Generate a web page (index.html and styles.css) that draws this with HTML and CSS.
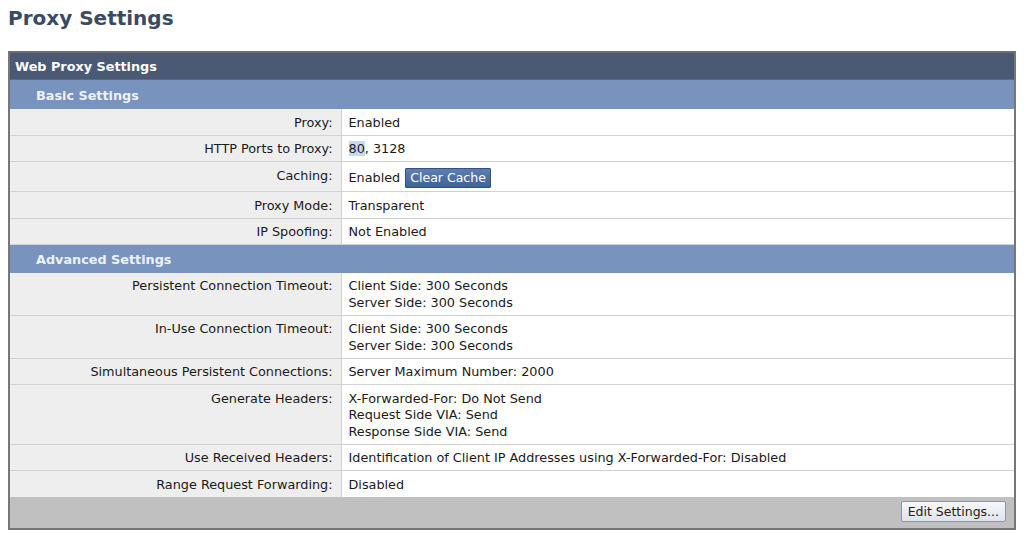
FILE: index.html
```html
<!DOCTYPE html>
<html lang="en">

<head>
    <meta charset="UTF-8">
    <title>Proxy Settings</title>
    <link rel="stylesheet" href="styles.css">
</head>

<body>
    <h1 class="page-title">Proxy Settings</h1>

    <div class="panel">
        <div class="panel-title">Web Proxy Settings</div>
        <table class="settings">
            <tr class="section first">
                <th colspan="2">Basic Settings</th>
            </tr>
            <tr>
                <td class="label">Proxy:</td>
                <td>Enabled</td>
            </tr>
            <tr>
                <td class="label">HTTP Ports to Proxy:</td>
                <td><span class="hl">80</span>, 3128</td>
            </tr>
            <tr>
                <td class="label">Caching:</td>
                <td>Enabled <button class="btn-blue">Clear Cache</button></td>
            </tr>
            <tr>
                <td class="label">Proxy Mode:</td>
                <td>Transparent</td>
            </tr>
            <tr>
                <td class="label">IP Spoofing:</td>
                <td>Not Enabled</td>
            </tr>
            <tr class="section">
                <th colspan="2">Advanced Settings</th>
            </tr>
            <tr>
                <td class="label">Persistent Connection Timeout:</td>
                <td>Client Side: 300 Seconds<br>Server Side: 300 Seconds</td>
            </tr>
            <tr>
                <td class="label">In-Use Connection Timeout:</td>
                <td>Client Side: 300 Seconds<br>Server Side: 300 Seconds</td>
            </tr>
            <tr>
                <td class="label">Simultaneous Persistent Connections:</td>
                <td>Server Maximum Number: 2000</td>
            </tr>
            <tr>
                <td class="label">Generate Headers:</td>
                <td>X-Forwarded-For: Do Not Send<br>Request Side VIA: Send<br>Response Side VIA: Send</td>
            </tr>
            <tr>
                <td class="label">Use Received Headers:</td>
                <td>Identification of Client IP Addresses using X-Forwarded-For: Disabled</td>
            </tr>
            <tr>
                <td class="label">Range Request Forwarding:</td>
                <td>Disabled</td>
            </tr>
        </table>
        <div class="panel-footer">
            <button class="btn-grey">Edit Settings...</button>
        </div>
    </div>
</body>

</html>
```

FILE: styles.css
```css
* {
    box-sizing: border-box;
}

body {
    margin: 8px;
    font-family: "DejaVu Sans", Verdana, sans-serif;
    font-size: 12.8px;
    color: #1a1a1a;
    background: #fff;
}

.page-title {
    margin: 0 0 23px;
    font-size: 20px;
    line-height: 20px;
    color: #3b4a62;
}

.panel {
    border: 2px solid #777;
    border-top-color: #6e6e6e;
}

.panel-title {
    background: #4a5a75;
    color: #fff;
    font-weight: bold;
    padding: 0 5px;
    height: 27px;
    line-height: 27px;
    border-bottom: 1px solid #5d6b82;
}

.settings {
    width: 100%;
    border-collapse: collapse;
}

.settings th {
    background: #7893bd;
    color: #eef2f8;
    text-align: left;
    font-weight: bold;
    height: 28px;
    padding: 1px 26px 0;
}

.settings .first th {
    height: 29px;
}

.settings td {
    border-bottom: 1px solid #d2d2d2;
    padding: 5.5px 7px 3.5px;
    line-height: 16.5px;
    vertical-align: top;
}

.settings td.label {
    width: 331px;
    text-align: right;
    background: #eeeeee;
    border-right: 1px solid #d2d2d2;
    padding-right: 8px;
}

.settings tr:last-child td {
    border-bottom: 0;
}

.hl {
    background: #c5d9f5;
}

.btn-blue {
    font: inherit;
    font-size: 12.5px;
    color: #fff;
    background: linear-gradient(#5d7fb0, #3f6398);
    border: 1px solid #34527f;
    border-radius: 1px;
    padding: 1px 4px;
    margin-left: 1px;
    line-height: 16px;
}

.panel-footer {
    background: #c0c0c0;
    height: 31px;
    padding: 4px 8px;
    text-align: right;
}

.btn-grey {
    font: inherit;
    font-size: 12.5px;
    color: #222;
    background: linear-gradient(#f6f8fb, #dfe4ec);
    border: 1px solid #8d97a8;
    border-radius: 2px;
    padding: 1px 6px;
    line-height: 17px;
}
```
